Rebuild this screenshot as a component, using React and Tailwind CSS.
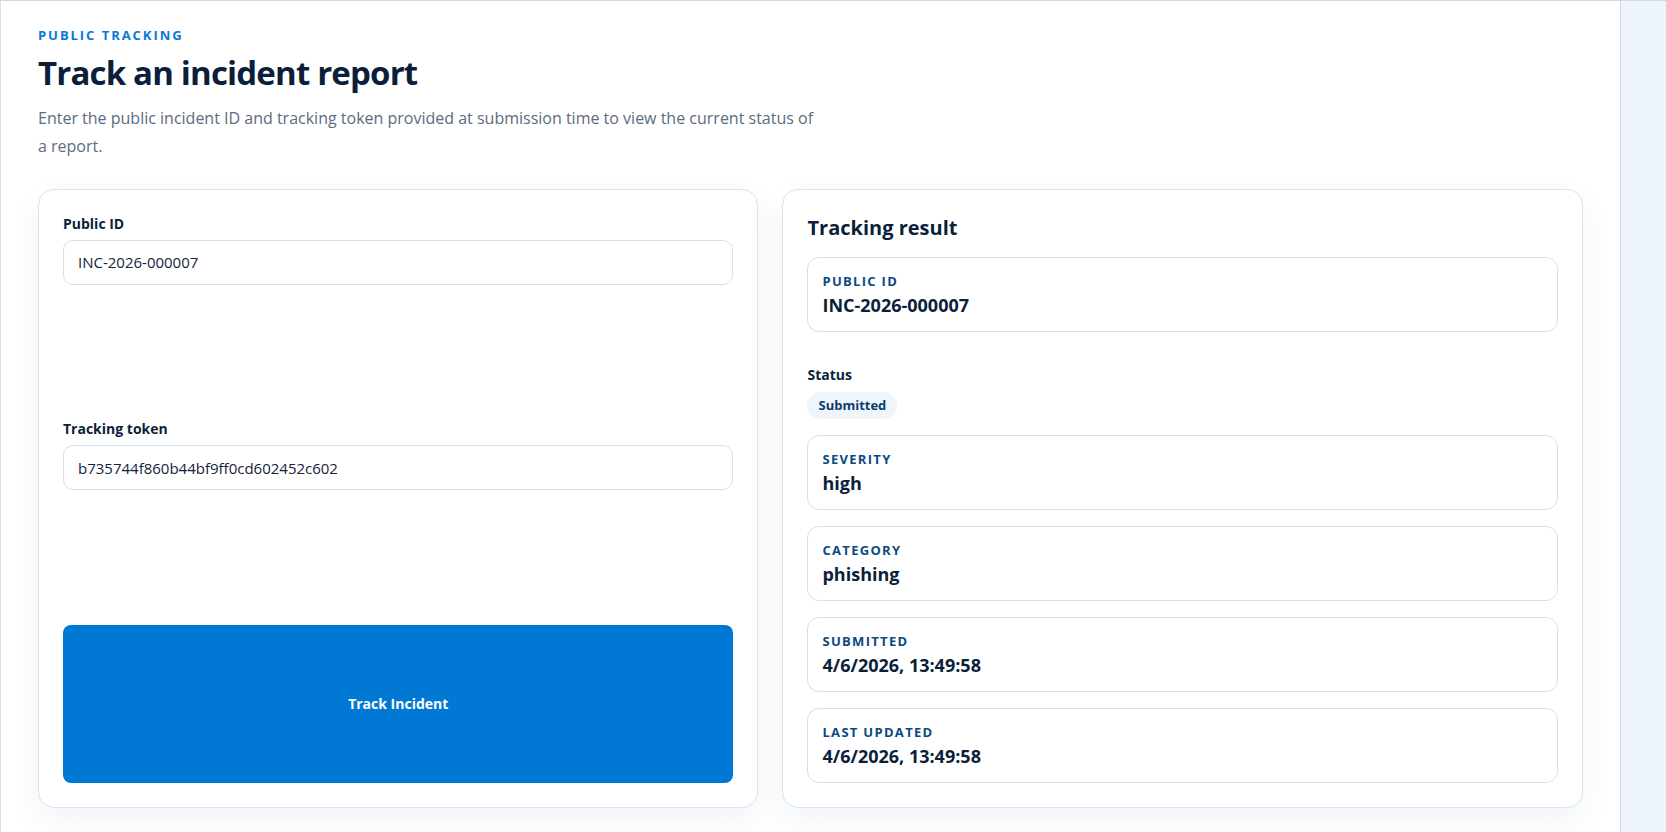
import React from "react";

const font = { fontFamily: '"Open Sans", "Noto Sans", sans-serif' };

function Field({ label, value }) {
  return (
    <div>
      <label className="block text-sm font-bold leading-5 text-[#0b1f3a]">{label}</label>
      <div className="mt-1.5 flex h-[45px] items-center rounded-[10px] border border-[#cfe2f3] bg-white px-[14px] text-[15px] text-[#14243d]">
        {value}
      </div>
    </div>
  );
}

function InfoBox({ label, value }) {
  return (
    <div className="rounded-xl border border-[#cfe2f3] bg-white px-[14px] pt-[15px] pb-[14px]">
      <div className="text-[13px] font-bold uppercase leading-4 tracking-[0.1em] text-[#0b4a80]">{label}</div>
      <div className="mt-1 text-lg font-bold leading-6 text-[#0b1f3a]">{value}</div>
    </div>
  );
}

export default function App() {
  return (
    <div style={font} className="flex min-h-screen border-t border-[#d6d6d6] bg-white">
      <main className="flex-1 border-l border-[#cfe2f3] bg-white px-[37px] pt-[26px] pb-6">
        <div className="text-[13px] font-bold uppercase leading-4 tracking-[0.15em] text-[#0a78d4]">Public tracking</div>
        <h1 className="mt-2.5 text-[33px] font-bold leading-10 tracking-tight text-[#0b1f3a]">Track an incident report</h1>
        <p className="mt-[11px] max-w-[782px] text-base leading-7 text-[#5b6b80]">
          Enter the public incident ID and tracking token provided at submission time to view the current status of a report.
        </p>

        <div className="mt-[29px] grid grid-cols-[0.9fr_1fr] gap-6">
          <section className="flex flex-col rounded-2xl border border-[#d3e5f5] bg-white p-6 shadow-[0_12px_32px_rgba(20,50,90,0.06)]">
            <form className="grid flex-1 gap-4" onSubmit={(e) => e.preventDefault()}>
              <Field label="Public ID" value="INC-2026-000007" />
              <Field label="Tracking token" value="b735744f860b44bf9ff0cd602452c602" />
              <button type="submit" className="rounded-lg bg-[#0078d4] py-2.5 text-sm font-bold leading-5 text-white">
                Track Incident
              </button>
            </form>
          </section>

          <section className="rounded-2xl border border-[#d3e5f5] bg-white p-6 shadow-[0_12px_32px_rgba(20,50,90,0.06)]">
            <div className="flex flex-col gap-4">
              <h2 className="text-xl font-bold leading-[27px] text-[#0b1f3a]">Tracking result</h2>
              <InfoBox label="Public ID" value="INC-2026-000007" />
              <div className="pt-[17px]">
                <div className="text-sm font-bold leading-5 text-[#0b1f3a]">Status</div>
                <span className="mt-[7px] inline-block rounded-full bg-[#eef5fb] px-[11px] py-1 text-[13px] font-bold leading-[19px] text-[#0b3d6e]">
                  Submitted
                </span>
              </div>
              <InfoBox label="Severity" value="high" />
              <InfoBox label="Category" value="phishing" />
              <InfoBox label="Submitted" value="4/6/2026, 13:49:58" />
              <InfoBox label="Last updated" value="4/6/2026, 13:49:58" />
            </div>
          </section>
        </div>
      </main>
      <aside className="w-[46px] shrink-0 border-l border-[#c9def2] bg-[#eef4fb]" />
    </div>
  );
}
